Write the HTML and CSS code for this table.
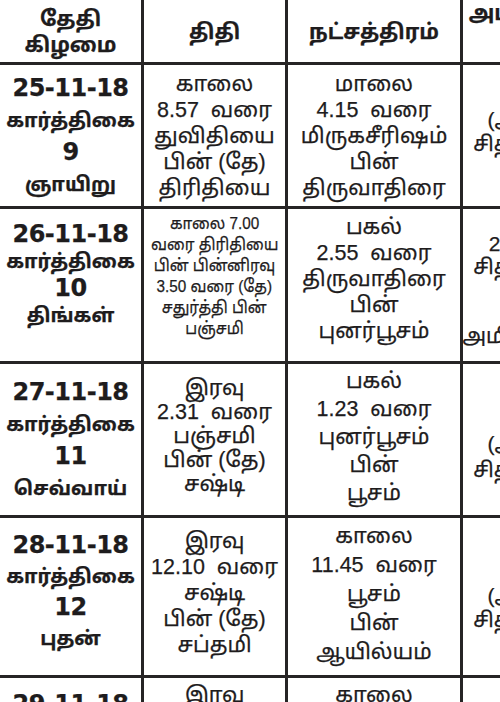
FILE: index.html
```html
<!DOCTYPE html>
<html lang="ta">
<head>
<meta charset="utf-8">
<title>பஞ்சாங்கம்</title>
<link rel="stylesheet" href="styles.css">
</head>
<body>
<div class="panchang">
  <div class="cell head"><span>தேதி</span><span>கிழமை</span></div>
  <div class="cell head"><span>திதி</span></div>
  <div class="cell head"><span>நட்சத்திரம்</span></div>
  <div class="cell head yoga-h"><span>அமிர்தாதி யோகம்</span><span>நேரம்</span></div>

  <div class="cell date r1"><span class="num">25-11-18</span><span>கார்த்திகை</span><span class="num">9</span><span>ஞாயிறு</span></div>
  <div class="cell txt r1"><span>காலை</span><span>8.57&nbsp; வரை</span><span>துவிதியை</span><span>பின் (தே)</span><span>திரிதியை</span></div>
  <div class="cell txt r1"><span>மாலை</span><span>4.15&nbsp; வரை</span><span>மிருகசீரிஷம்</span><span>பின்</span><span>திருவாதிரை</span></div>
  <div class="cell yoga y1"><span>(அமிர்தம்)</span><span>சித்தயோகம்</span></div>

  <div class="cell date r2"><span class="num">26-11-18</span><span>கார்த்திகை</span><span class="num">10</span><span>திங்கள்</span></div>
  <div class="cell small r2"><span>காலை 7.00</span><span>வரை திரிதியை</span><span>பின் பின்னிரவு</span><span>3.50 வரை (தே)</span><span>சதுர்த்தி பின்</span><span>பஞ்சமி</span></div>
  <div class="cell txt r2b"><span>பகல்</span><span>2.55&nbsp; வரை</span><span>திருவாதிரை</span><span>பின்</span><span>புனர்பூசம்</span></div>
  <div class="cell yoga y2"><span>பகல்</span><span>2.55 வரை</span><span>சித்தயோகம்</span><span>இரவு</span><span>3.50</span><span>அமிர்தயோகம்</span></div>

  <div class="cell date r3"><span class="num">27-11-18</span><span>கார்த்திகை</span><span class="num">11</span><span>செவ்வாய்</span></div>
  <div class="cell txt r3"><span>இரவு</span><span>2.31&nbsp; வரை</span><span>பஞ்சமி</span><span>பின் (தே)</span><span>சஷ்டி</span></div>
  <div class="cell txt r3b"><span>பகல்</span><span>1.23&nbsp; வரை</span><span>புனர்பூசம்</span><span>பின்</span><span>பூசம்</span></div>
  <div class="cell yoga y3"><span>(அமிர்தம்)</span><span>சித்தயோகம்</span></div>

  <div class="cell date r4"><span class="num">28-11-18</span><span>கார்த்திகை</span><span class="num">12</span><span>புதன்</span></div>
  <div class="cell txt r4"><span>இரவு</span><span>12.10&nbsp; வரை</span><span>சஷ்டி</span><span>பின் (தே)</span><span>சப்தமி</span></div>
  <div class="cell txt r4b"><span>காலை</span><span>11.45&nbsp; வரை</span><span>பூசம்</span><span>பின்</span><span>ஆயில்யம்</span></div>
  <div class="cell yoga y4"><span>(அமிர்தம்)</span><span>சித்தயோகம்</span></div>

  <div class="cell date r5"><span class="num">29-11-18</span><span>கார்த்திகை</span></div>
  <div class="cell txt r5"><span>இரவு</span><span>10.05&nbsp; வரை</span></div>
  <div class="cell txt r5"><span>காலை</span><span>9.58&nbsp; வரை</span></div>
  <div class="cell yoga r5"><span>இரவு</span></div>
</div>
</body>
</html>
```
FILE: styles.css
```css
html, body {
  margin: 0;
  padding: 0;
  overflow: hidden;
  background: #ffffff;
}

body {
  width: 500px;
  height: 702px;
  font-family: "Liberation Sans", "Noto Sans Tamil", "Noto Sans", sans-serif;
  color: #1e1c1d;
}

.panchang {
  display: grid;
  grid-template-columns: 141px 141px 172px 146px;
  grid-template-rows: 62px 141px 152px 151px 157px 160px;
  gap: 3px;
  background: #262425;
  width: 609px;
}

.cell {
  background: #ffffff;
  display: flex;
  flex-direction: column;
  align-items: center;
  justify-content: center;
  text-align: center;
  white-space: nowrap;
  overflow: hidden;
  -webkit-text-stroke: 0.25px #1e1c1d;
}

.cell span {
  display: block;
}

/* header */
.head {
  font-weight: bold;
  font-size: 21px;
  line-height: 26px;
  padding-top: 2px;
}
.yoga-h {
  padding-left: 86px;
  padding-bottom: 12px;
}

/* date column */
.date {
  font-weight: bold;
  font-size: 19.5px;
  line-height: 32px;
}
.date .num {
  font-family: "DejaVu Sans", sans-serif;
  font-size: 24px;
  letter-spacing: -0.5px;
}
.date.r2 {
  line-height: 27px;
  padding-bottom: 20px;
}
.date.r4 {
  line-height: 31px;
  padding-bottom: 10px;
}

/* regular text cells */
.txt {
  font-size: 21.5px;
  line-height: 26px;
}
.txt.r2b {
  padding-bottom: 12px;
}
.txt.r3 {
  line-height: 24px;
  padding-bottom: 8px;
}
.txt.r3b {
  line-height: 28px;
  padding-bottom: 6px;
}
.txt.r4 {
  padding-bottom: 8px;
}
.txt.r4b {
  line-height: 29px;
  padding-bottom: 4px;
}

/* condensed cell */
.small {
  font-size: 17px;
  line-height: 21px;
  padding-bottom: 18px;
}
.small span {
  transform: scaleX(0.9);
}

/* yoga column */
.yoga {
  font-size: 21px;
  line-height: 24px;
  padding-left: 12px;
}
.yoga.y1 {
  padding-bottom: 8px;
}
.yoga.y2 {
  line-height: 23px;
  padding-bottom: 14px;
}
.yoga.y3 {
  line-height: 26px;
  padding-top: 34px;
}
.yoga.y4 {
  padding-top: 22px;
}

/* partial last row */
.r5 {
  justify-content: flex-start;
  padding-top: 4px;
}
.date.r5 {
  padding-top: 10px;
}
```
